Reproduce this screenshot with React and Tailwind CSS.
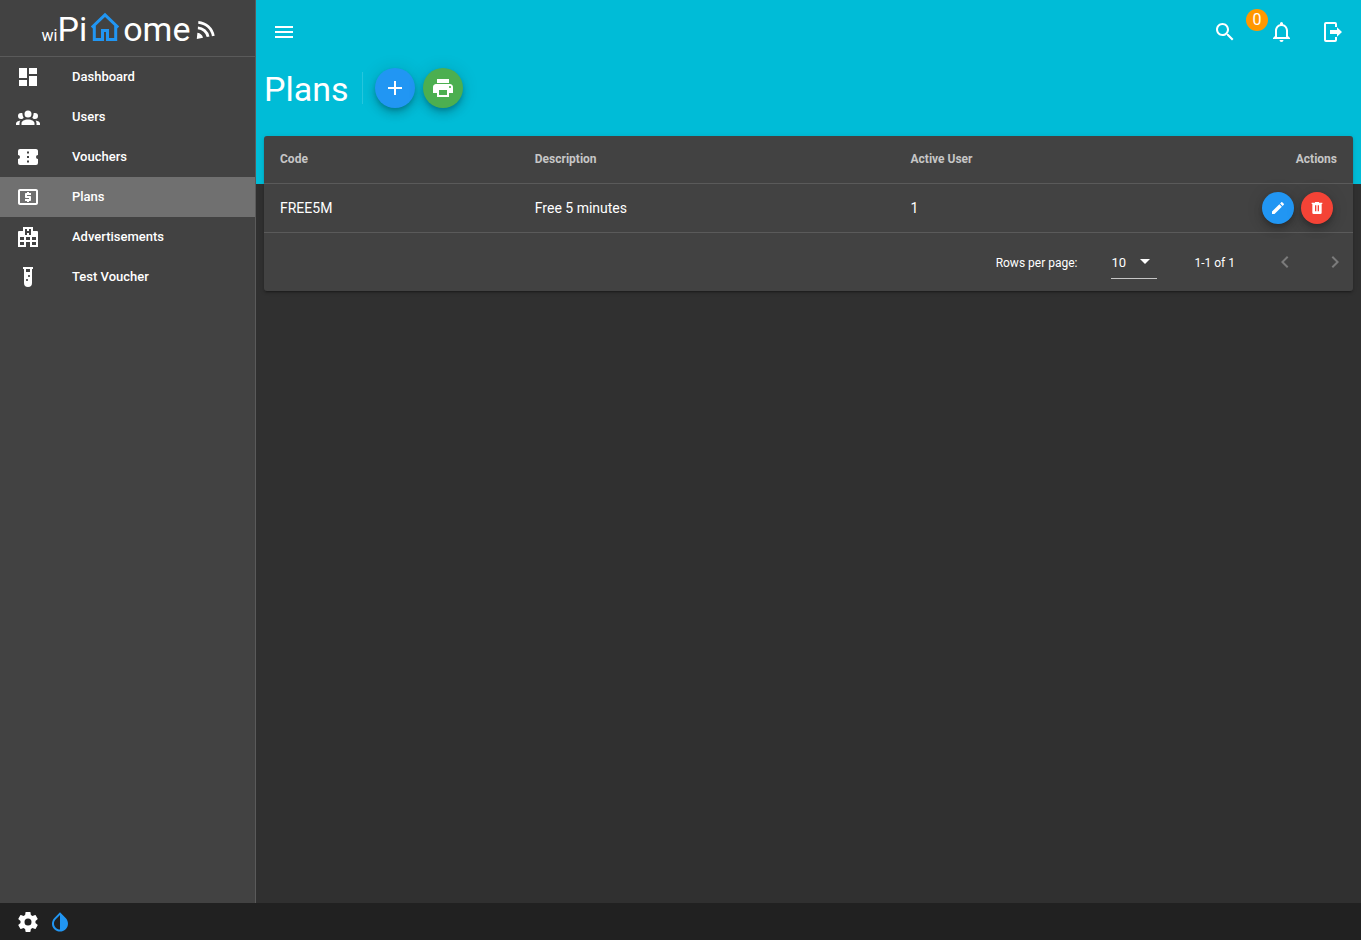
const icons = {
  dashboard: "M13,3V9H21V3M13,21H21V11H13M3,21H11V15H3M3,13H11V3H3V13Z",
  users:
    "M12,5.5A3.5,3.5 0 0,1 15.5,9A3.5,3.5 0 0,1 12,12.5A3.5,3.5 0 0,1 8.5,9A3.5,3.5 0 0,1 12,5.5M5,8C5.56,8 6.08,8.15 6.53,8.42C6.38,9.85 6.8,11.27 7.66,12.38C7.16,13.34 6.16,14 5,14A3,3 0 0,1 2,11A3,3 0 0,1 5,8M19,8A3,3 0 0,1 22,11A3,3 0 0,1 19,14C17.84,14 16.84,13.34 16.34,12.38C17.2,11.27 17.62,9.85 17.47,8.42C17.92,8.15 18.44,8 19,8M5.5,18.25C5.5,16.18 8.41,14.5 12,14.5C15.59,14.5 18.5,16.18 18.5,18.25V20H5.5V18.25M0,20V18.5C0,17.11 1.89,15.94 4.45,15.6C3.86,16.28 3.5,17.22 3.5,18.25V20H0M24,20H20.5V18.25C20.5,17.22 20.14,16.28 19.55,15.6C22.11,15.94 24,17.11 24,18.5V20Z",
  voucher:
    "M13,8.5H11V6.5H13V8.5M13,13H11V11H13V13M13,17.5H11V15.5H13V17.5M22,10V6C22,4.89 21.1,4 20,4H4A2,2 0 0,0 2,6V10C3.11,10 4,10.9 4,12A2,2 0 0,1 2,14V18A2,2 0 0,0 4,20H20A2,2 0 0,0 22,18V14A2,2 0 0,1 20,12A2,2 0 0,1 22,10Z",
  plan:
    "M11 17h2v-1h1c.55 0 1-.45 1-1v-3c0-.55-.45-1-1-1h-3v-1h4V8h-2V7h-2v1h-1c-.55 0-1 .45-1 1v3c0 .55.45 1 1 1h3v1H9v2h2v1zm9-13H4c-1.11 0-1.99.89-1.99 2L2 18c0 1.11.89 2 2 2h16c1.11 0 2-.89 2-2V6c0-1.11-.89-2-2-2zm0 14H4V6h16v12z",
  building:
    "M2,22V7A1,1 0 0,1 3,6H7V2H17V6H21A1,1 0 0,1 22,7V22H14V17H10V22H2M9,4V10H11V8H13V10H15V4H13V6H11V4H9M4,20H8V17H4V20M4,15H8V12H4V15M16,20H20V17H16V20M16,15H20V12H16V15M10,15H14V12H10V15Z",
  tube:
    "M7,2V4H8V18A4,4 0 0,0 12,22A4,4 0 0,0 16,18V4H17V2H7M11,16C10.4,16 10,15.6 10,15C10,14.4 10.4,14 11,14C11.6,14 12,14.4 12,15C12,15.6 11.6,16 11,16M13,12C12.4,12 12,11.6 12,11C12,10.4 12.4,10 13,10C13.6,10 14,10.4 14,11C14,11.6 13.6,12 13,12M14,7H10V4H14V7Z",
  menu: "M3 18h18v-2H3v2zm0-5h18v-2H3v2zm0-7v2h18V6H3z",
  search:
    "M15.5 14h-.79l-.28-.27C15.41 12.59 16 11.11 16 9.5 16 5.91 13.09 3 9.5 3S3 5.91 3 9.5 5.91 16 9.5 16c1.61 0 3.09-.59 4.23-1.57l.27.28v.79l5 4.99L20.49 19l-4.99-5zm-6 0C7.01 14 5 11.99 5 9.5S7.01 5 9.5 5 14 7.01 14 9.5 11.99 14 9.5 14z",
  bell:
    "M16,17H7V10.5C7,8 9,6 11.5,6C14,6 16,8 16,10.5M18,16V10.5C18,7.43 15.86,4.86 13,4.18V3.5A1.5,1.5 0 0,0 11.5,2A1.5,1.5 0 0,0 10,3.5V4.18C7.13,4.86 5,7.43 5,10.5V16L3,18V19H20V18M11.5,22A2,2 0 0,0 13.5,20H9.5A2,2 0 0,0 11.5,22Z",
  exit:
    "M16,16.75V14H9V10H16V7.25L21,12L16,16.75M14,2A2,2 0 0,1 16,4V7H14V4H5V20H14V17H16V20A2,2 0 0,1 14,22H5A2,2 0 0,1 3,20V4A2,2 0 0,1 5,2H14Z",
  plus: "M19 13h-6v6h-2v-6H5v-2h6V5h2v6h6v2z",
  print:
    "M19 8H5c-1.66 0-3 1.34-3 3v6h4v4h12v-4h4v-6c0-1.66-1.34-3-3-3zm-3 11H8v-5h8v5zm3-7c-.55 0-1-.45-1-1s.45-1 1-1 1 .45 1 1-.45 1-1 1zm-1-9H6v4h12V3z",
  edit:
    "M3 17.25V21h3.75L17.81 9.94l-3.75-3.75L3 17.25zM20.71 7.04c.39-.39.39-1.02 0-1.41l-2.34-2.34c-.39-.39-1.02-.39-1.41 0l-1.83 1.83 3.75 3.75 1.83-1.83z",
  trash:
    "M9,3V4H4V6H5V19A2,2 0 0,0 7,21H17A2,2 0 0,0 19,19V6H20V4H15V3H9M9,8H11V17H9V8M13,8H15V17H13V8Z",
  caret: "M7 10l5 5 5-5z",
  left: "M15.41 7.41L14 6l-6 6 6 6 1.41-1.41L10.83 12z",
  right: "M10 6L8.59 7.41 13.17 12l-4.58 4.59L10 18l6-6z",
  gear:
    "M12,15.5A3.5,3.5 0 0,1 8.5,12A3.5,3.5 0 0,1 12,8.5A3.5,3.5 0 0,1 15.5,12A3.5,3.5 0 0,1 12,15.5M19.43,12.97C19.47,12.65 19.5,12.33 19.5,12C19.5,11.67 19.47,11.34 19.43,11L21.54,9.37C21.73,9.22 21.78,8.95 21.66,8.73L19.66,5.27C19.54,5.05 19.27,4.96 19.05,5.05L16.56,6.05C16.04,5.66 15.5,5.32 14.87,5.07L14.5,2.42C14.46,2.18 14.25,2 14,2H10C9.75,2 9.54,2.18 9.5,2.42L9.13,5.07C8.5,5.32 7.96,5.66 7.44,6.05L4.95,5.05C4.73,4.96 4.46,5.05 4.34,5.27L2.34,8.73C2.21,8.95 2.27,9.22 2.46,9.37L4.57,11C4.53,11.34 4.5,11.67 4.5,12C4.5,12.33 4.53,12.65 4.57,12.97L2.46,14.63C2.27,14.78 2.21,15.05 2.34,15.27L4.34,18.73C4.46,18.95 4.73,19.03 4.95,18.95L7.44,17.94C7.96,18.34 8.5,18.68 9.13,18.93L9.5,21.58C9.54,21.82 9.75,22 10,22H14C14.25,22 14.46,21.82 14.5,21.58L14.87,18.93C15.5,18.67 16.04,18.34 16.56,17.94L19.05,18.95C19.27,19.03 19.54,18.95 19.66,18.73L21.66,15.27C21.78,15.05 21.73,14.78 21.54,14.63L19.43,12.97Z",
  drop:
    "M17.66 7.93L12 2.27 6.34 7.93c-3.12 3.12-3.12 8.19 0 11.31C7.9 20.8 9.95 21.58 12 21.58c2.05 0 4.1-.78 5.66-2.34 3.12-3.12 3.12-8.19 0-11.31zM12 19.59c-1.6 0-3.11-.62-4.24-1.76C6.62 16.69 6 15.19 6 13.59s.62-3.11 1.76-4.24L12 5.1v14.49z",
};

function Icon({ name, className = "size-6" }) {
  return (
    <svg viewBox="0 0 24 24" fill="currentColor" fillRule="evenodd" aria-hidden="true" className={`shrink-0 ${className}`}>
      <path d={icons[name]} />
    </svg>
  );
}

const nav = [
  ["Dashboard", "dashboard"],
  ["Users", "users"],
  ["Vouchers", "voucher"],
  ["Plans", "plan"],
  ["Advertisements", "building"],
  ["Test Voucher", "tube"],
];

const plans = [{ code: "FREE5M", description: "Free 5 minutes", active: 1 }];

const raised =
  "flex shrink-0 items-center justify-center rounded-full text-white shadow-[0_3px_5px_-1px_rgba(0,0,0,0.2),0_6px_10px_0_rgba(0,0,0,0.14),0_1px_18px_0_rgba(0,0,0,0.12)]";

function Logo() {
  return (
    <a href="#home" className="flex h-14 items-baseline justify-center pt-2 pl-0.5 leading-[42px]">
      <span className="text-base leading-[42px]">wi</span>
      <span className="text-[34px]">Pi</span>
      <svg viewBox="1 0 28 30" className="mt-1 ml-1 h-[30px] w-7 self-start" fill="none" stroke="#2196f3" strokeWidth="3" aria-hidden="true">
        <path d="M1.8 15.500 15 2.800l13.200 12.700M4.300 13.500v14h8.200v-9h5v9h8.200v-14" />
      </svg>
      <span className="ml-1 text-[34px]">ome</span>
      <svg viewBox="0 0 20 20" className="mt-3 ml-[5px] size-5 self-start" fill="none" stroke="#fff" strokeWidth="2.800" aria-hidden="true">
        <path d="M3.300 2.300A16.500 16.500 0 0 1 18.300 16M2.900 7.900A11 11 0 0 1 13.100 16.800" />
        <path d="M2.400 12.800 1.800 18.900l6.200-1.200c-.6-2.600-2.600-4.500-5.600-4.900z" fill="#fff" stroke="none" />
      </svg>
    </a>
  );
}

export default function App() {
  return (
    <div className="flex min-h-screen flex-col bg-[#303030] font-[Roboto,sans-serif] text-white">
      <div className="flex grow">
        <aside className="w-64 shrink-0 border-r border-[#5a5a5a] bg-[#424242]">
          <Logo />
          <nav className="border-t border-[#5a5a5a]">
            {nav.map(([label, icon]) => (
              <a
                key={label}
                href={`#${icon}`}
                className={`flex h-10 items-center gap-8 px-4 text-[13px] font-medium ${label === "Plans" ? "bg-[#707070]" : ""}`}
              >
                <Icon name={icon} />
                {label}
              </a>
            ))}
          </nav>
        </aside>
        <main className="min-w-0 grow bg-[linear-gradient(#00bcd7_184px,#303030_184px)] px-2">
          <header className="flex h-16 items-center justify-between px-2">
            <button aria-label="Menu" className="flex size-6 items-center justify-center">
              <Icon name="menu" />
            </button>
            <div className="flex items-center">
              <button aria-label="Search">
                <Icon name="search" />
              </button>
              <button aria-label="Notifications, 0 new" className="relative ml-[33px]">
                <Icon name="bell" />
                <span className="absolute -top-[11px] -left-6 flex size-[22px] items-center justify-center rounded-full bg-[#ff9800] text-base">0</span>
              </button>
              <button aria-label="Log out" className="ml-[27px]">
                <Icon name="exit" />
              </button>
            </div>
          </header>
          <div className="flex h-12 items-center">
            <h1 className="pt-0.5 text-[34px] leading-10">Plans</h1>
            <div className="mr-3 ml-[13px] h-8 w-px bg-white/15" />
            <button aria-label="Add plan" className={`${raised} size-10 bg-[#2196f3]`}>
              <Icon name="plus" />
            </button>
            <button aria-label="Print" className={`${raised} ml-2 size-10 bg-[#4caf50]`}>
              <Icon name="print" />
            </button>
          </div>
          <section className="mt-6 rounded-[3px] bg-[#424242] shadow-[0_3px_1px_-2px_rgba(0,0,0,0.2),0_2px_2px_0_rgba(0,0,0,0.14),0_1px_5px_0_rgba(0,0,0,0.12)]">
            <table className="w-full text-left text-sm">
              <thead>
                <tr className="h-[47px] border-b border-[#5a5a5a] text-xs text-[#c6c6c6]">
                  <th className="w-[23.4%] px-4 font-bold">Code</th>
                  <th className="w-[34.5%] px-4 font-bold">Description</th>
                  <th className="px-4 font-bold">Active User</th>
                  <th className="px-4 text-right font-bold">Actions</th>
                </tr>
              </thead>
              <tbody>
                {plans.map((plan) => (
                  <tr key={plan.code} className="h-[49px] border-b border-[#5a5a5a]">
                    <td className="px-4">{plan.code}</td>
                    <td className="px-4">{plan.description}</td>
                    <td className="px-4">{plan.active}</td>
                    <td className="px-5">
                      <div className="flex justify-end gap-[7px]">
                        <button aria-label="Edit" className={`${raised} size-8 bg-[#2196f3]`}>
                          <Icon name="edit" className="size-4" />
                        </button>
                        <button aria-label="Delete" className={`${raised} size-8 bg-[#f44336]`}>
                          <Icon name="trash" className="size-4" />
                        </button>
                      </div>
                    </td>
                  </tr>
                ))}
              </tbody>
            </table>
            <div className="flex h-[58px] items-center justify-end pr-[6px] text-xs">
              <label htmlFor="rows" className="pt-0.5">Rows per page:</label>
              <div className="relative ml-[34px] flex h-[34px] items-center border-b border-[#c6c6c6]">
                <select id="rows" defaultValue="10" className="h-[33px] w-[46px] appearance-none bg-transparent pt-1 text-[13px] outline-none">
                  <option className="text-black">10</option>
                  <option className="text-black">25</option>
                </select>
                <Icon name="caret" className="pointer-events-none absolute right-0 size-6" />
              </div>
              <span className="ml-[37px] pt-0.5">1-1 of 1</span>
              <button aria-label="Previous page" disabled className="ml-[38px] text-[#7b7b7b]">
                <Icon name="left" />
              </button>
              <button aria-label="Next page" disabled className="ml-[26px] text-[#7b7b7b]">
                <Icon name="right" />
              </button>
            </div>
          </section>
        </main>
      </div>
      <footer className="flex h-[37px] shrink-0 items-center gap-2 bg-[#212121] px-4">
        <button aria-label="Settings">
          <Icon name="gear" />
        </button>
        <button aria-label="Invert colors" className="text-[#2196f3]">
          <Icon name="drop" />
        </button>
      </footer>
    </div>
  );
}
